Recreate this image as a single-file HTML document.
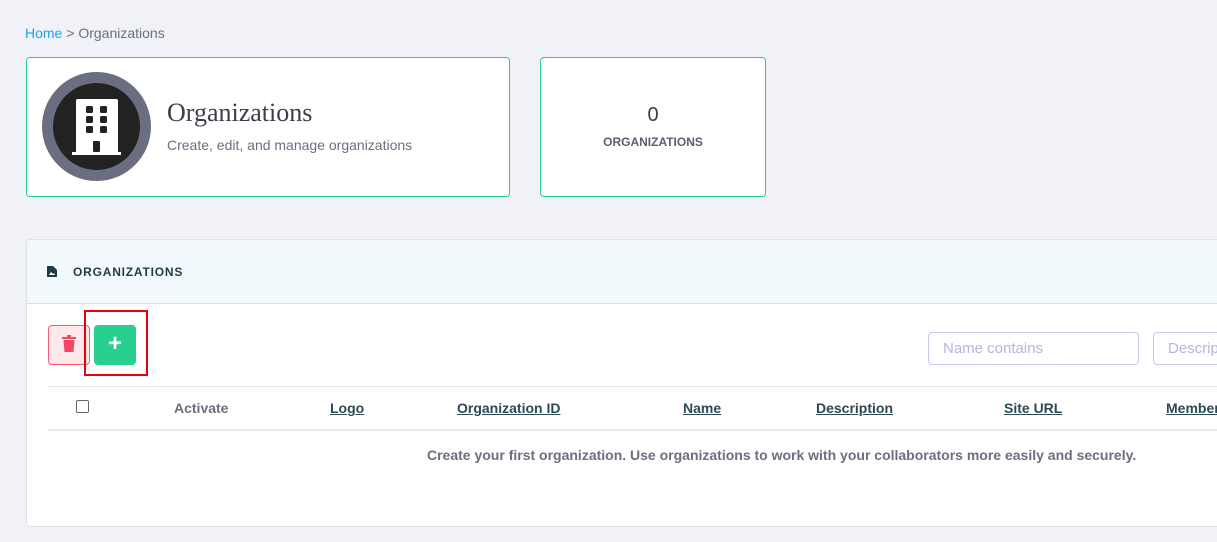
<!DOCTYPE html>
<html><head><style>
*{box-sizing:border-box;margin:0;padding:0}
body{width:1217px;height:542px;overflow:hidden;background:#f1f2f7;font-family:"Liberation Sans",sans-serif;position:relative}
.abs{position:absolute}
.card{background:#fff;border:1px solid #2bd18e;border-radius:4px}
.th{font-size:14px;font-weight:bold;color:#2c4a52;text-decoration:underline;position:absolute;top:400px;white-space:nowrap}
</style></head><body>
<div class="abs" style="left:25px;top:25px;font-size:14px;color:#6c6f7f"><span style="color:#1ea3e8">Home</span> &gt; Organizations</div>
<div class="abs card" style="left:26px;top:57px;width:484px;height:140px"></div>
<div class="abs" style="left:42px;top:72px;width:109px;height:109px;border-radius:50%;background:#6b6d80"></div>
<div class="abs" style="left:53px;top:83px;width:87px;height:87px;border-radius:50%;background:#222"></div>
<svg class="abs" style="left:70px;top:98px" width="52" height="58" viewBox="0 0 52 58"><rect x="6" y="1" width="42" height="55" rx="2" fill="#fff"/><rect x="2" y="54" width="49" height="3" fill="#fff"/><g fill="#222"><rect x="16" y="8" width="7" height="7" rx="1.5"/><rect x="30" y="8" width="7" height="7" rx="1.5"/><rect x="16" y="18" width="7" height="7" rx="1.5"/><rect x="30" y="18" width="7" height="7" rx="1.5"/><rect x="16" y="28" width="7" height="7" rx="1.5"/><rect x="30" y="28" width="7" height="7" rx="1.5"/><rect x="23" y="43" width="7" height="11" rx="1"/></g></svg>
<div class="abs" style="left:167px;top:98px;font-family:'Liberation Serif',serif;font-size:26px;color:#3b3d4c">Organizations</div>
<div class="abs" style="left:167px;top:137px;font-size:14px;color:#6c6f7f">Create, edit, and manage organizations</div>
<div class="abs card" style="left:540px;top:57px;width:226px;height:140px;text-align:center">
<div style="margin-top:46px;font-size:20px;color:#3b3d4c">0</div>
<div style="margin-top:8px;font-size:12px;font-weight:bold;color:#5b5e6e">ORGANIZATIONS</div></div>
<div class="abs" style="left:26px;top:239px;width:1200px;height:288px;background:#fff;border:1px solid #dde1e8;border-radius:4px;overflow:hidden">
<div style="height:64px;background:#f2fafd;border-bottom:1px solid #d9dde4"></div></div>
<svg class="abs" style="left:47px;top:266px" width="10" height="11" viewBox="0 0 10 11"><path d="M0 0h6l4 4v7H0z" fill="#1f3c45"/><path d="M2 9l2-3 2 2 1-1 1 2z" fill="#fff"/></svg>
<div class="abs" style="left:73px;top:265px;font-size:12px;font-weight:bold;letter-spacing:0.8px;color:#1f3c45">ORGANIZATIONS</div>
<div class="abs" style="left:48px;top:325px;width:42px;height:40px;background:#fde8ec;border:1px solid #ff5a73;border-radius:4px"></div>
<svg class="abs" style="left:62px;top:335px" width="14" height="17" viewBox="0 0 14 17"><rect x="0" y="2" width="14" height="2" fill="#f04862"/><rect x="5" y="0" width="4" height="2" fill="#f04862"/><path d="M1.5 5h11l-1 12h-9z" fill="#f04862"/></svg>
<div class="abs" style="left:94px;top:325px;width:42px;height:40px;background:#28cf8e;border-radius:4px;color:#fff;font-size:24px;font-weight:bold;text-align:center;line-height:38px">+</div>
<div class="abs" style="left:84px;top:310px;width:64px;height:66px;border:2px solid #e8000b"></div>
<div class="abs" style="left:928px;top:332px;width:211px;height:33px;border:1px solid #c6c9ee;border-radius:4px;background:#fff;font-size:15px;color:#b3b6e0;padding:7px 14px">Name contains</div>
<div class="abs" style="left:1153px;top:332px;width:100px;height:33px;border:1px solid #c6c9ee;border-radius:4px;background:#fff;font-size:15px;color:#b3b6e0;padding:7px 14px">Description</div>
<div class="abs" style="left:48px;top:386px;width:1180px;height:1px;background:#e2e8f0"></div>
<div class="abs" style="left:48px;top:429px;width:1180px;height:2px;background:#e2ecf4"></div>
<div class="abs" style="left:76px;top:400px;width:13px;height:13px;border:1px solid #666;border-radius:2px;background:#fff"></div>
<div class="abs" style="left:174px;top:400px;font-size:14px;font-weight:bold;color:#6c6f7f">Activate</div>
<div class="th" style="left:330px">Logo</div>
<div class="th" style="left:457px">Organization ID</div>
<div class="th" style="left:683px">Name</div>
<div class="th" style="left:816px">Description</div>
<div class="th" style="left:1004px">Site URL</div>
<div class="th" style="left:1166px">Members</div>
<div class="abs" style="left:427px;top:447px;font-size:14px;font-weight:bold;color:#6c6f7f">Create your first organization. Use organizations to work with your collaborators more easily and securely.</div>
</body></html>
